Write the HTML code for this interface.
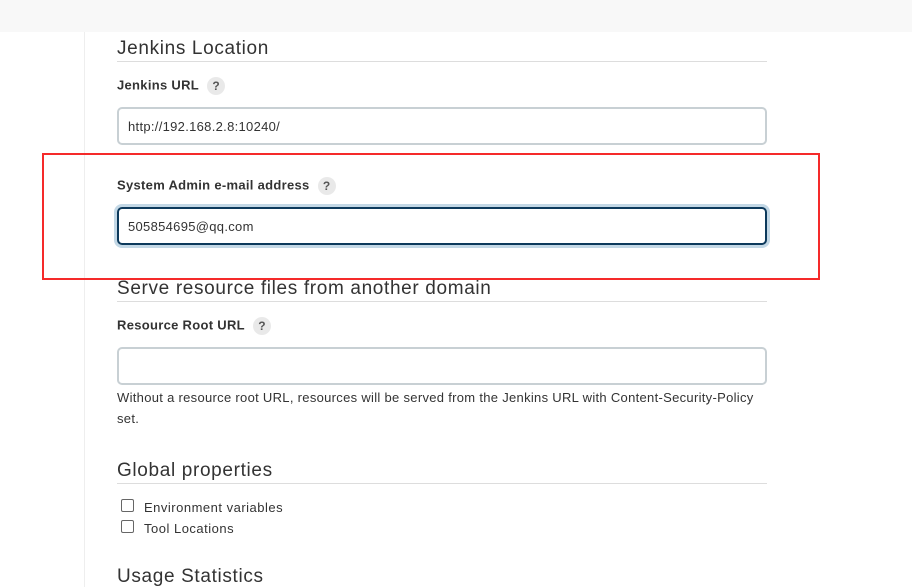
<!DOCTYPE html><html><head><style>
body{margin:0;width:912px;height:587px;background:#fff;position:relative;overflow:hidden;font-family:"Liberation Sans",sans-serif;color:#333}
.a{position:absolute}
.h{font-size:19px;color:#333;left:117px;white-space:nowrap;letter-spacing:0.65px}
.hr{left:117px;width:650px;height:1px;background:#ddd}
.l{left:117px;font-size:13px;font-weight:bold;color:#333;white-space:nowrap;letter-spacing:0.3px}
.q{display:inline-block;width:18px;height:18px;border-radius:9px;background:#e9e9e9;color:#555;font-size:12px;text-align:center;line-height:18px;margin-left:8px;font-weight:bold;vertical-align:middle;letter-spacing:0}
.i{left:117px;width:646px;height:34px;border:2px solid #c8d0d4;border-radius:5px;font-size:13px;line-height:35px;text-indent:9px;color:#333;letter-spacing:0.3px}
.cb{left:121px;width:11px;height:11px;border:1px solid #666;border-radius:2px}
.t{left:144px;font-size:13px;color:#333;letter-spacing:0.5px}
</style></head><body>
<div class="a" style="left:0;top:0;width:912px;height:32px;background:#f8f8f8"></div>
<div class="a" style="left:84px;top:32px;width:1px;height:555px;background:#eee"></div>
<div class="a h" style="top:38px">Jenkins Location</div>
<div class="a hr" style="top:61px"></div>
<div class="a l" style="top:77px">Jenkins URL<span class="q">?</span></div>
<div class="a i" style="top:107px">http://192.168.2.8:10240/</div>
<div class="a" style="left:42px;top:153px;width:774px;height:123px;border:2px solid #f52a2a"></div>
<div class="a l" style="top:177px">System Admin e-mail address<span class="q">?</span></div>
<div class="a i" style="top:207px;border-color:#0d3a5c;box-shadow:0 0 0 3px #c3d8e6">505854695@qq.com</div>
<div class="a h" style="top:278px">Serve resource files from another domain</div>
<div class="a hr" style="top:301px"></div>
<div class="a l" style="top:317px">Resource Root URL<span class="q">?</span></div>
<div class="a i" style="top:347px"></div>
<div class="a" style="left:117px;top:387px;width:700px;white-space:nowrap;font-size:13px;line-height:21px;color:#333;letter-spacing:0.3px">Without a resource root URL, resources will be served from the Jenkins URL with Content-Security-Policy<br>set.</div>
<div class="a h" style="top:460px">Global properties</div>
<div class="a hr" style="top:483px"></div>
<div class="a cb" style="top:499px"></div><div class="a t" style="top:500px">Environment variables</div>
<div class="a cb" style="top:520px"></div><div class="a t" style="top:521px">Tool Locations</div>
<div class="a h" style="top:566px">Usage Statistics</div>
</body></html>
